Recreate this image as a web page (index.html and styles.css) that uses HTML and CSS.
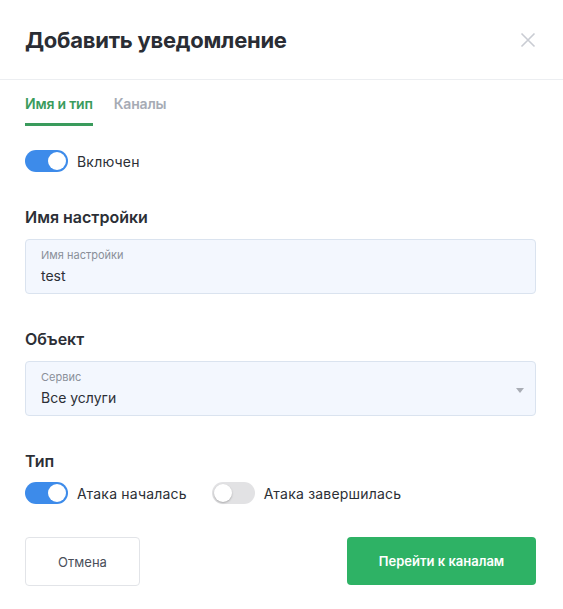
FILE: index.html
```html
<!DOCTYPE html>
<html>
<head>
  <title>Добавить уведомление</title>
  <link rel="stylesheet" href="styles.css">
</head>
<body>
  <div class="modal">
    <div class="modal-header">
      <h1 class="modal-title">Добавить уведомление</h1>
      <button class="close" aria-label="Закрыть">
        <svg width="16" height="16" viewBox="0 0 16 16">
          <path d="M1.5 1.5L14.5 14.5M14.5 1.5L1.5 14.5" stroke="#c9ccd3" stroke-width="1.6" fill="none"/>
        </svg>
      </button>
    </div>

    <div class="tabs">
      <div class="tab active">Имя и тип</div>
      <div class="tab">Каналы</div>
    </div>

    <div class="modal-body">
      <label class="switch-row">
        <span class="switch on"><span class="knob"></span></span>
        <span class="switch-label">Включен</span>
      </label>

      <div class="section-title">Имя настройки</div>
      <div class="field">
        <div class="field-label">Имя настройки</div>
        <div class="field-value">test</div>
      </div>

      <div class="section-title">Объект</div>
      <div class="field select">
        <div class="field-label">Сервис</div>
        <div class="field-value">Все услуги</div>
        <span class="arrow"></span>
      </div>

      <div class="section-title">Тип</div>
      <div class="switches">
        <label class="switch-row">
          <span class="switch on"><span class="knob"></span></span>
          <span class="switch-label">Атака началась</span>
        </label>
        <label class="switch-row">
          <span class="switch"><span class="knob"></span></span>
          <span class="switch-label">Атака завершилась</span>
        </label>
      </div>

      <div class="actions">
        <button class="btn btn-cancel">Отмена</button>
        <button class="btn btn-primary">Перейти к каналам</button>
      </div>
    </div>
  </div>
</body>
</html>
```

FILE: styles.css
```css
body {
  margin: 0;
  background-color: #fff;
  font-family: Inter, "Noto Sans", sans-serif;
  color: #2c2f36;
}
.modal {
  width: 563px;
}
.modal-header {
  height: 80px;
  box-sizing: border-box;
  padding: 0 27px 0 25px;
  display: flex;
  align-items: center;
  justify-content: space-between;
  border-bottom: 1px solid #eceef1;
}
.modal-title {
  margin: 0;
  font-size: 22px;
  font-weight: 700;
  line-height: 28px;
  color: #2a2d34;
  letter-spacing: -0.25px;
}
.close {
  border: none;
  background: none;
  padding: 0;
  width: 16px;
  height: 16px;
  cursor: pointer;
}
.tabs {
  display: flex;
  gap: 21px;
  padding: 0 25px;
}
.tab {
  font-size: 14px;
  font-weight: 600;
  line-height: 17px;
  letter-spacing: -0.2px;
  padding: 15px 0 11px;
  border-bottom: 3px solid transparent;
  color: #a6abb5;
}
.tab.active {
  color: #3a9b5c;
  border-bottom-color: #3a9b5c;
}
.modal-body {
  padding: 24px 27px 0 25px;
}
.switch-row {
  display: flex;
  align-items: center;
  gap: 9px;
  width: fit-content;
  font-size: 14px;
  line-height: 17px;
  letter-spacing: 0.2px;
  color: #2c2f36;
}
.switch {
  position: relative;
  width: 43px;
  height: 22px;
  border-radius: 11px;
  background-color: #e2e2e4;
}
.switch.on {
  background-color: #3d8bea;
}
.knob {
  position: absolute;
  top: 2px;
  left: 2px;
  width: 18px;
  height: 18px;
  border-radius: 50%;
  background-color: #fff;
  box-shadow: 0 1px 2px rgba(0,0,0,0.25);
}
.switch.on .knob {
  left: 23px;
  box-shadow: none;
}
.section-title {
  font-size: 16px;
  font-weight: 600;
  line-height: 20px;
  margin-top: 35px;
  margin-bottom: 12px;
}
.field {
  position: relative;
  height: 55px;
  box-sizing: border-box;
  padding: 9px 15px 0;
  background-color: #f3f7fe;
  border: 1px solid #dae3ef;
  border-radius: 4px;
}
.field-label {
  font-size: 11px;
  line-height: 13px;
  color: #8a8f99;
}
.field-value {
  font-size: 14px;
  line-height: 17px;
  margin-top: 5px;
  color: #2c2f36;
}
.arrow {
  position: absolute;
  right: 11px;
  top: 26px;
  border-left: 4px solid transparent;
  border-right: 4px solid transparent;
  border-top: 5px solid #a9adb5;
}
.switches {
  display: flex;
  gap: 25px;
  margin-top: -1px;
}
.actions {
  display: flex;
  justify-content: space-between;
  margin-top: 33px;
}
.btn {
  font-family: Inter, "Noto Sans", sans-serif;
  font-size: 13px;
  border-radius: 4px;
  cursor: pointer;
}
.btn-cancel {
  width: 115px;
  height: 49px;
  background-color: #fff;
  border: 1px solid #e2e4e8;
  color: #4a4f5a;
}
.btn-primary {
  width: 189px;
  height: 48px;
  border: none;
  background-color: #2eb265;
  color: #fff;
  font-weight: 600;
}
```
